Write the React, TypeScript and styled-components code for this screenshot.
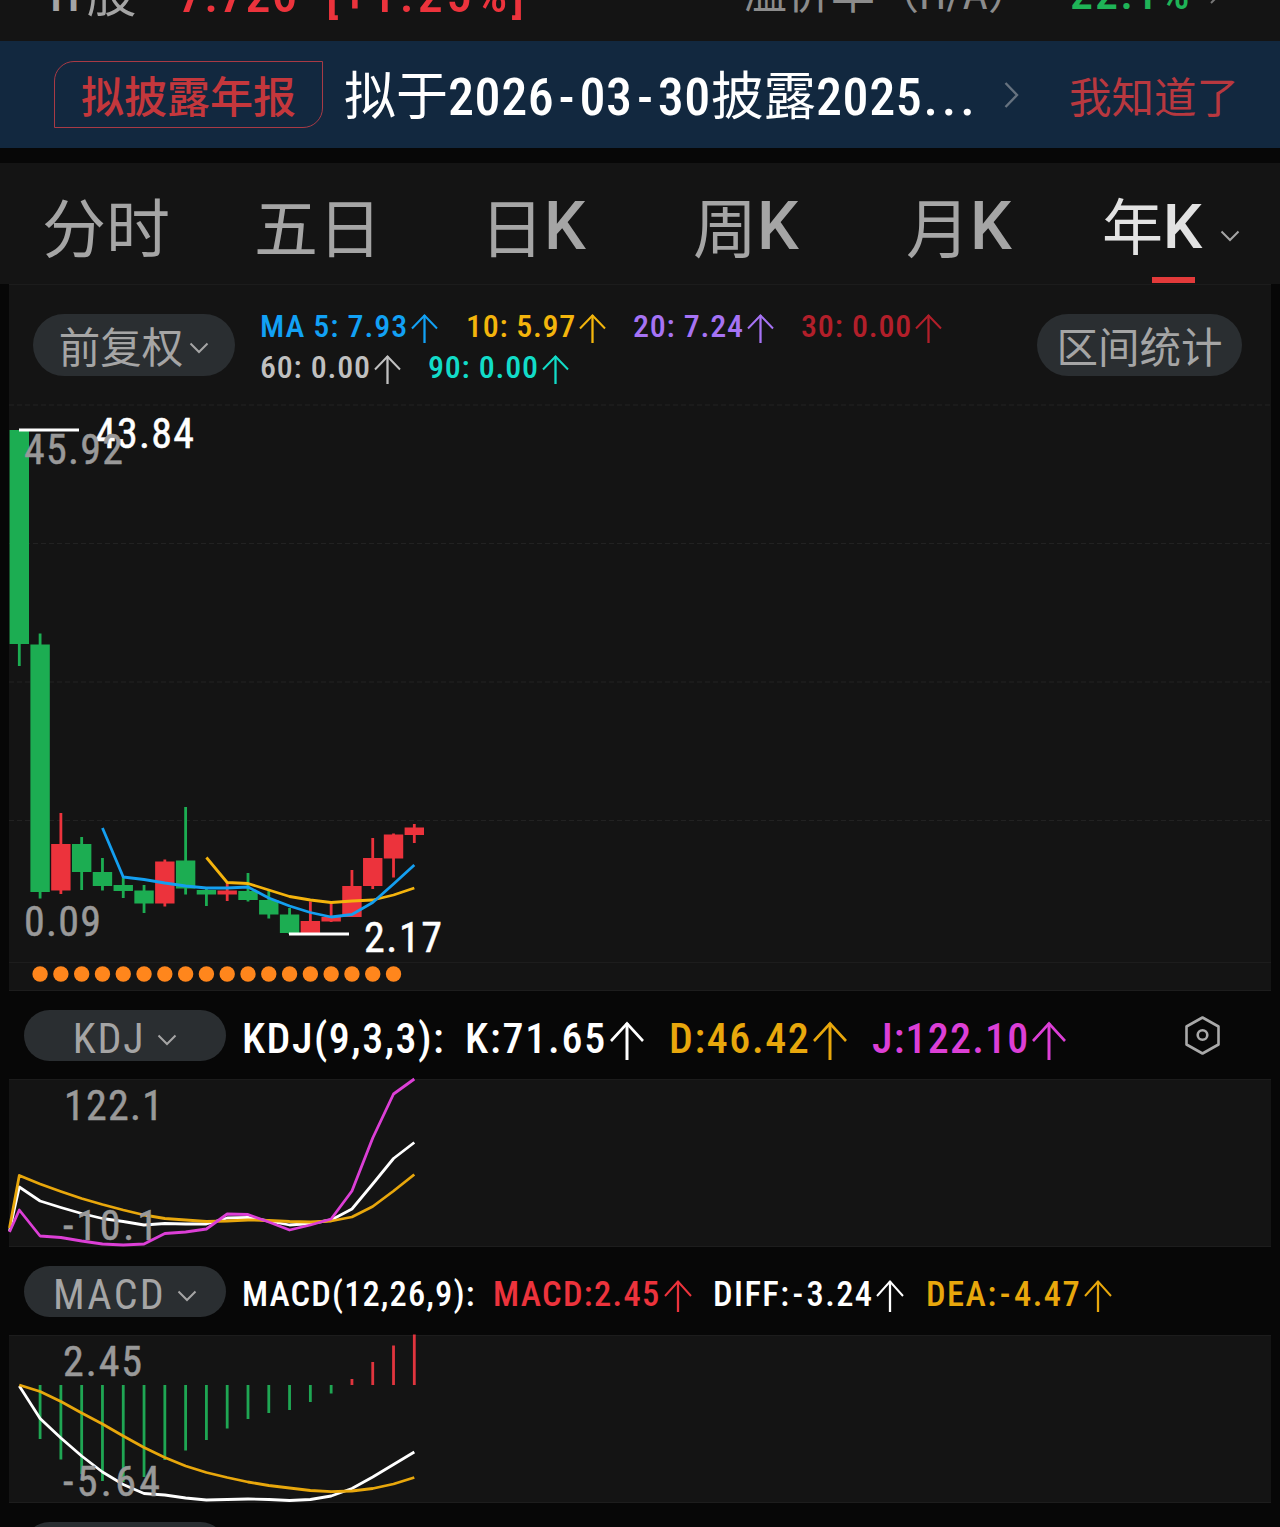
import React from "react";
import styled, { createGlobalStyle } from "styled-components";

const GlobalStyle = createGlobalStyle`
  * { box-sizing: border-box; }
  body {
    margin: 0;
    background: #070707;
    font-family: Roboto, "Noto Sans CJK SC", sans-serif;
    font-stretch: 87.5%;
    overflow: hidden;
  }
`;

const GREEN = "#1cad52";
const RED = "#ec333c";
const GOLD = "#e8a70c";
const MAGENTA = "#dc3fd6";
const GREY = "#a5a5a5";

const Screen = styled.main`
  width: 1280px;
  height: 1527px;
  overflow: hidden;
  display: flex;
  flex-direction: column;
  background: #070707;
`;

const Txt = styled.span<{ $size: number; $ls?: number; $weight?: number; $color?: string; $gap?: number; $drop?: number }>`
  font-size: ${(p) => p.$size}px;
  letter-spacing: ${(p) => p.$ls ?? 0}px;
  font-weight: ${(p) => p.$weight ?? 500};
  color: ${(p) => p.$color ?? "inherit"};
  margin-left: ${(p) => p.$gap ?? 0}px;
  margin-top: ${(p) => p.$drop ?? 0}px;
  white-space: pre;
`;

/* Quote strip */
const QuoteStrip = styled.header`
  height: 41px;
  flex: none;
  display: flex;
  align-items: flex-end;
  padding: 0 56px 16px 50px;
  background: #141414;
  line-height: 60px;
  overflow: hidden;
`;

const QuoteGroup = styled.div<{ $width: number }>`
  width: ${(p) => p.$width}px;
  height: 60px;
  flex: none;
  display: flex;
  align-items: flex-start;
  white-space: nowrap;
`;

/* Announcement banner */
const Banner = styled.section`
  height: 107px;
  flex: none;
  display: flex;
  align-items: center;
  padding-left: 54px;
  background: #12283f;
`;

const Tag = styled.div`
  width: 269px;
  height: 67px;
  margin-bottom: 1px;
  padding: 4px 0 0 26px;
  border: 1.5px solid #a83a45;
  border-radius: 20px 0 20px 0;
  line-height: 65px;
  color: #c4373c;
`;

const BannerTitle = styled.div`
  width: 660px;
  margin-left: 21px;
  padding-top: 18px;
  line-height: 80px;
  color: #fff;
  white-space: nowrap;
`;

const Hyphen = styled.span<{ $pad: number }>`
  padding: 0 ${(p) => p.$pad}px;
`;

const Dismiss = styled.div`
  margin-left: 50px;
  padding-top: 18px;
  line-height: 80px;
  color: #b8383f;
`;

/* Period tabs */
const Tabs = styled.nav`
  height: 121px;
  flex: none;
  margin-top: 15px;
  display: grid;
  grid-template-columns: 212px 226px 213px 213px 196px 1fr;
  padding-left: 42px;
  background: #141414;
  color: ${GREY};
  font-stretch: 100%;
`;

const Tab = styled.div<{ $active?: boolean }>`
  position: relative;
  display: flex;
  align-items: center;
  padding-top: 7px;
  line-height: 80px;
  color: ${(p) => (p.$active ? "#e2e2e2" : "inherit")};
  ${(p) =>
    p.$active &&
    `&::after {
      content: "";
      position: absolute;
      left: 50px;
      bottom: 1px;
      width: 43px;
      height: 6px;
      background: #e33a3a;
    }`}
`;

/* Chart panels */
const Panel = styled.section<{ $height: number }>`
  height: ${(p) => p.$height}px;
  flex: none;
  margin: 0 9px;
  background: #141414;
  border-top: 1px solid #1c1c1c;
  border-bottom: 1px solid #1d1d1d;
`;

const PanelHead = styled.div`
  height: 120px;
  display: flex;
  align-items: flex-start;
  padding: 29px 29px 0 24px;
`;

const Pill = styled.div<{ $w: number; $h: number; $drop?: number }>`
  width: ${(p) => p.$w}px;
  height: ${(p) => p.$h}px;
  flex: none;
  display: flex;
  align-items: center;
  justify-content: center;
  padding-top: ${(p) => p.$drop ?? 0}px;
  border-radius: 32px;
  background: #2a2e31;
  color: ${GREY};
  line-height: 50px;
`;

const MaLegend = styled.div`
  flex: 1;
  display: flex;
  flex-wrap: wrap;
  margin: -8px 0 0 25px;
  line-height: 41px;
`;

const Item = styled.div<{ $w: number; $color: string }>`
  width: ${(p) => p.$w}px;
  flex: none;
  display: flex;
  align-items: center;
  color: ${(p) => p.$color};
`;

const IndicatorHead = styled.div<{ $h: number }>`
  height: ${(p) => p.$h}px;
  flex: none;
  display: flex;
  align-items: flex-start;
  padding: 19px 0 0 24px;
`;

const IndicatorLegend = styled.div`
  display: flex;
  height: 51px;
  width: 942px;
  margin-left: 16px;
  padding-top: 5px;
  line-height: 51px;
`;

const Chart = styled.svg`
  display: block;
  overflow: visible;
`;

const ArrowSvg = styled.svg`
  flex: none;
  margin-left: 3px;
`;

function Arrow({ w, h, drop }: { w: number; h: number; drop: number }) {
  return (
    <ArrowSvg width={w} height={h + drop} viewBox={`0 ${-drop} ${w} ${h + drop}`} fill="none" stroke="currentColor">
      <path d={`M${w / 2} 1V${h}`} strokeWidth={h > 35 ? 3 : 2.3} />
      <path d={`M1 ${h * 0.5}L${w / 2} 1.5L${w - 1} ${h * 0.5}`} strokeWidth={h > 35 ? 2.6 : 2} />
    </ArrowSvg>
  );
}

const Chevron = styled.svg<{ $ml: number; $mt: number }>`
  flex: none;
  margin: ${(p) => p.$mt}px 0 0 ${(p) => p.$ml}px;
`;

function Down({ ml, mt }: { ml: number; mt: number }) {
  return (
    <Chevron $ml={ml} $mt={mt} width="20" height="12" viewBox="0 0 20 12" fill="none" stroke="#a5a5a5" strokeWidth="2">
      <path d="M1.5 1.5L10 10L18.5 1.5" />
    </Chevron>
  );
}

const cx = (i: number) => 19.3 + 20.79 * i;

type Candle = [high: number, top: number, bottom: number, low: number, up: 0 | 1];
const candles: Candle[] = [
  [430, 430, 644, 666, 0],
  [633.5, 644.5, 892, 898.5, 0],
  [813, 844, 890.5, 894, 1],
  [837, 844, 872, 890, 0],
  [858, 872, 886, 890.5, 0],
  [876, 885, 891, 898, 0],
  [885, 890.5, 903.5, 913, 0],
  [859.5, 861.5, 903.5, 906.5, 1],
  [807, 860.5, 888.5, 894.5, 0],
  [887, 890, 894.5, 906, 0],
  [882, 890.5, 894.5, 901, 1],
  [873, 891, 900, 901.5, 0],
  [891, 900, 914.5, 918.5, 0],
  [908, 914.5, 933, 934, 0],
  [901.5, 921, 933, 934, 1],
  [903, 917, 921.5, 922, 1],
  [870, 886, 917, 917, 1],
  [838, 858, 886, 889, 1],
  [833.5, 834.5, 858.5, 877.5, 1],
  [824, 827.5, 835, 843, 1],
];

const ma5 = [828, 877, 879.5, 883, 886, 888, 888, 887, 898, 906, 912.5, 917, 914.5, 902.5, 884, 865];
const ma10 = [857.5, 882.5, 883.5, 890, 896.5, 900, 902.5, 901, 900, 895, 888];

const kLine = [1187, 1201, 1207.5, 1213.5, 1218.5, 1221.5, 1225, 1223.5, 1224, 1224, 1218, 1217.5, 1221, 1225, 1223.5, 1220, 1209, 1184, 1158.5, 1142.5];
const dLine = [1175.5, 1184, 1191.5, 1198.5, 1204.5, 1210, 1215, 1218.5, 1220, 1221.5, 1221, 1220, 1220.5, 1221.5, 1222, 1221, 1217, 1206.5, 1191, 1174.5];
const jLine = [1210, 1236, 1237.5, 1241, 1244, 1245, 1244, 1233.5, 1232, 1229, 1214, 1214.5, 1222, 1230, 1225, 1219, 1191, 1138, 1094, 1079];

const macdBars = [1385, 1439, 1459.5, 1474, 1481, 1482, 1477, 1460, 1450.5, 1440, 1428.5, 1419, 1413, 1410, 1402, 1393.5, 1379, 1362, 1345.5, 1334.5];
const diff = [1386, 1418.5, 1438, 1456, 1472, 1484.5, 1493.5, 1495, 1498, 1500, 1499.5, 1499, 1499.5, 1500.5, 1499.5, 1496, 1488.5, 1477, 1464.5, 1452];
const dea = [1385, 1391.5, 1401.5, 1413, 1424, 1436, 1447.5, 1457.5, 1466, 1472.5, 1477.5, 1482, 1485.5, 1488, 1490.5, 1491.7, 1491, 1488.5, 1484, 1477.5];

function Line({ ys, from = 0, color, lead }: { ys: number[]; from?: number; color: string; lead?: number }) {
  const pts = ys.map((y, i) => `${cx(i + from)},${y}`);
  if (lead !== undefined) pts.unshift(`9.5,${lead}`);
  return <polyline points={pts.join(" ")} fill="none" stroke={color} strokeWidth={2.8} strokeLinejoin="round" />;
}

const AxisText = styled.text`
  font-family: Roboto, sans-serif;
  font-size: 42px;
  stroke-width: 0.5px;
`;

function Label({ x, y, w, children, color = "#999" }: { x: number; y: number; w: number; children: string; color?: string }) {
  return (
    <AxisText x={x} y={y} textLength={w} fill={color} stroke={color}>
      {children}
    </AxisText>
  );
}

export default function App() {
  return (
    <Screen>
      <GlobalStyle />
      <QuoteStrip>
        <QuoteGroup $width={128}>
          <Txt $size={48} $color={GREY}>H</Txt>
          <Txt $size={50} $color={GREY} $weight={400} $gap={7}>股</Txt>
        </QuoteGroup>
        <QuoteGroup $width={148}>
          <Txt $size={50} $color={RED} $ls={1.2}>7.726</Txt>
        </QuoteGroup>
        <QuoteGroup $width={417}>
          <Txt $size={50} $color={RED} $ls={3.9}>[+1.25%]</Txt>
        </QuoteGroup>
        <QuoteGroup $width={327}>
          <Txt $size={44} $color="#8c8c8c" $weight={400} $drop={-1}>溢价率（H/A）</Txt>
        </QuoteGroup>
        <QuoteGroup $width={140}>
          <Txt $size={46} $color="#1fb457" $ls={2.1} $drop={-2}>22.1%</Txt>
        </QuoteGroup>
        <svg width="12" height="60" viewBox="0 0 12 60" fill="none" stroke="#777" strokeWidth="2">
          <path d="M1 20L10 29L1 38" />
        </svg>
      </QuoteStrip>

      <Banner>
        <Tag>
          <Txt $size={43}>拟披露年报</Txt>
        </Tag>
        <BannerTitle>
          <Txt $size={52} $weight={400}>拟于</Txt>
          <Txt $size={52} $ls={0.6}>
            2026<Hyphen $pad={4.2}>-</Hyphen>03<Hyphen $pad={4.2}>-</Hyphen>30
          </Txt>
          <Txt $size={52.5} $weight={400}>披露</Txt>
          <Txt $size={52} $ls={0.6}>2025</Txt>
          <Txt $size={52} $ls={4} $gap={1}>...</Txt>
        </BannerTitle>
        <svg width="15" height="28" viewBox="0 0 15 28" fill="none" stroke="#66727f" strokeWidth="2.4">
          <path d="M1.5 2L13 14L1.5 26" />
        </svg>
        <Dismiss>
          <Txt $size={42.5} $weight={400}>我知道了</Txt>
        </Dismiss>
      </Banner>

      <Tabs>
        <Tab><Txt $size={64} $weight={400} $drop={7}>分时</Txt></Tab>
        <Tab><Txt $size={64} $weight={400} $drop={7}>五日</Txt></Tab>
        <Tab><Txt $size={64} $weight={400} $drop={7}>日</Txt><Txt $size={66}>K</Txt></Tab>
        <Tab><Txt $size={64} $weight={400} $drop={7}>周</Txt><Txt $size={66}>K</Txt></Tab>
        <Tab><Txt $size={64} $weight={400} $drop={7}>月</Txt><Txt $size={66}>K</Txt></Tab>
        <Tab $active>
          <Txt $size={61} $weight={400} $drop={4}>年</Txt>
          <Txt $size={62}>K</Txt>
          <Down ml={18} mt={18} />
        </Tab>
      </Tabs>

      <Panel $height={707}>
        <PanelHead>
          <Pill $w={202} $h={62} $drop={8}>
            <Txt $size={41.5} $weight={400}>前复权</Txt>
            <Down ml={6} mt={-3} />
          </Pill>
          <MaLegend>
            <Item $w={206} $color="#12a1f5"><Txt $size={32} $ls={0.9}>MA 5: 7.93</Txt><Arrow w={27} h={29} drop={3} /></Item>
            <Item $w={167} $color="#f3b50c"><Txt $size={32} $ls={0.7}>10: 5.97</Txt><Arrow w={27} h={29} drop={3} /></Item>
            <Item $w={168} $color="#a673f5"><Txt $size={32} $ls={0.8}>20: 7.24</Txt><Arrow w={27} h={29} drop={3} /></Item>
            <Item $w={170} $color="#b21f2a"><Txt $size={32} $ls={0.85}>30: 0.00</Txt><Arrow w={27} h={29} drop={3} /></Item>
            <Item $w={168} $color="#c0c0c0"><Txt $size={32} $ls={0.8}>60: 0.00</Txt><Arrow w={27} h={29} drop={3} /></Item>
            <Item $w={168} $color="#12dcc8"><Txt $size={32} $ls={0.8}>90: 0.00</Txt><Arrow w={27} h={29} drop={3} /></Item>
          </MaLegend>
          <Pill $w={205} $h={62} $drop={8}>
            <Txt $size={41.5} $weight={400}>区间统计</Txt>
          </Pill>
        </PanelHead>
        <Chart width="1262" height="585" viewBox="9 405 1262 585">
          {[405, 543.5, 682, 820.5].map((y) => (
            <line key={y} x1="9" x2="1271" y1={y} y2={y} stroke="#222" strokeWidth="1.2" strokeDasharray="5 3" />
          ))}
          <line x1="9" x2="1271" y1="962.5" y2="962.5" stroke="#1d1d1d" />
          {candles.map(([high, top, bottom, low, up], i) => (
            <g key={i} fill={up ? RED : GREEN}>
              <rect x={cx(i) - 1.4} y={high} width="2.8" height={low - high} />
              <rect x={cx(i) - 9.7} y={top} width="19.4" height={bottom - top} />
            </g>
          ))}
          <Line ys={ma10} from={9} color="#f5b40d" />
          <Line ys={ma5} from={4} color="#149ff0" />
          <path d="M19 430H79M289 934H349" stroke="#fff" strokeWidth="2.8" />
          <Label x={95} y={447.5} w={99} color="#fff">43.84</Label>
          <Label x={364} y={951.5} w={78} color="#fff">2.17</Label>
          <Label x={24} y={463.5} w={99}>45.92</Label>
          <Label x={24} y={935.5} w={77}>0.09</Label>
          {candles.slice(2).map((_, i) => (
            <circle key={i} cx={cx(i + 1)} cy="974" r="7.7" fill="#ff861c" />
          ))}
        </Chart>
      </Panel>

      <IndicatorHead $h={88}>
        <Pill $w={202} $h={51} $drop={6}>
          <Txt $size={42} $weight={400} $ls={1.8}>KDJ</Txt>
          <Down ml={12} mt={2} />
        </Pill>
        <IndicatorLegend>
          <Item $w={223} $color="#fff"><Txt $size={42} $ls={1.5}>KDJ(9,3,3):</Txt></Item>
          <Item $w={204} $color="#fff"><Txt $size={42} $ls={1.8}>K:71.65</Txt><Arrow w={34} h={38} drop={5} /></Item>
          <Item $w={203} $color={GOLD}><Txt $size={42} $ls={1.6}>D:46.42</Txt><Arrow w={34} h={38} drop={5} /></Item>
          <Item $w={204} $color={MAGENTA}><Txt $size={42} $ls={1.2}>J:122.10</Txt><Arrow w={34} h={38} drop={5} /></Item>
        </IndicatorLegend>
        <svg width="36" height="51" viewBox="0 0 36 51" fill="none" stroke="#a9a9a9" strokeWidth="2.6" strokeLinejoin="round">
          <path d="M18.5 7.5L34.5 16.5V34.5L18.5 43.5L2.5 34.5V16.5Z" />
          <circle cx="18.5" cy="25" r="4.8" />
        </svg>
      </IndicatorHead>
      <Panel $height={168}>
        <Chart width="1262" height="166" viewBox="9 1080 1262 166">
          <Line ys={kLine} lead={1231} color="#fff" />
          <Line ys={dLine} lead={1228} color={GOLD} />
          <Label x={64} y={1120} w={99}>122.1</Label>
          <Label x={63} y={1239.5} w={95}>-10.1</Label>
          <Line ys={jLine} lead={1232} color={MAGENTA} />
        </Chart>
      </Panel>

      <IndicatorHead $h={88}>
        <Pill $w={202} $h={51} $drop={6}>
          <Txt $size={42} $weight={400} $ls={2.3}>MACD</Txt>
          <Down ml={11} mt={2} />
        </Pill>
        <IndicatorLegend>
          <Item $w={251} $color="#fff"><Txt $size={34.5} $ls={1.1}>MACD(12,26,9):</Txt></Item>
          <Item $w={220} $color={RED}><Txt $size={34.5} $ls={1.3}>MACD:2.45</Txt><Arrow w={28} h={32} drop={3} /></Item>
          <Item $w={213} $color="#fff">
            <Txt $size={34.5} $ls={1.4}>DIFF:<Hyphen $pad={2}>-</Hyphen>3.24</Txt>
            <Arrow w={28} h={32} drop={3} />
          </Item>
          <Item $w={204} $color={GOLD}>
            <Txt $size={34.5} $ls={1.5}>DEA:<Hyphen $pad={2}>-</Hyphen>4.47</Txt>
            <Arrow w={28} h={32} drop={3} />
          </Item>
        </IndicatorLegend>
      </IndicatorHead>
      <Panel $height={168}>
        <Chart width="1262" height="166" viewBox="9 1336 1262 166">
          {macdBars.map((y, i) => (
            <rect key={i} x={cx(i) - 1.4} y={Math.min(y, 1385)} width="2.8" height={Math.abs(y - 1385)} fill={y < 1385 ? "#e0353e" : "#1fa653"} />
          ))}
          <Line ys={diff} color="#fff" />
          <Line ys={dea} color={GOLD} />
          <Label x={63} y={1376} w={79}>2.45</Label>
          <Label x={63} y={1495.5} w={97}>-5.64</Label>
        </Chart>
      </Panel>
      <IndicatorHead $h={88}>
        <Pill $w={202} $h={51} />
      </IndicatorHead>
    </Screen>
  );
}
